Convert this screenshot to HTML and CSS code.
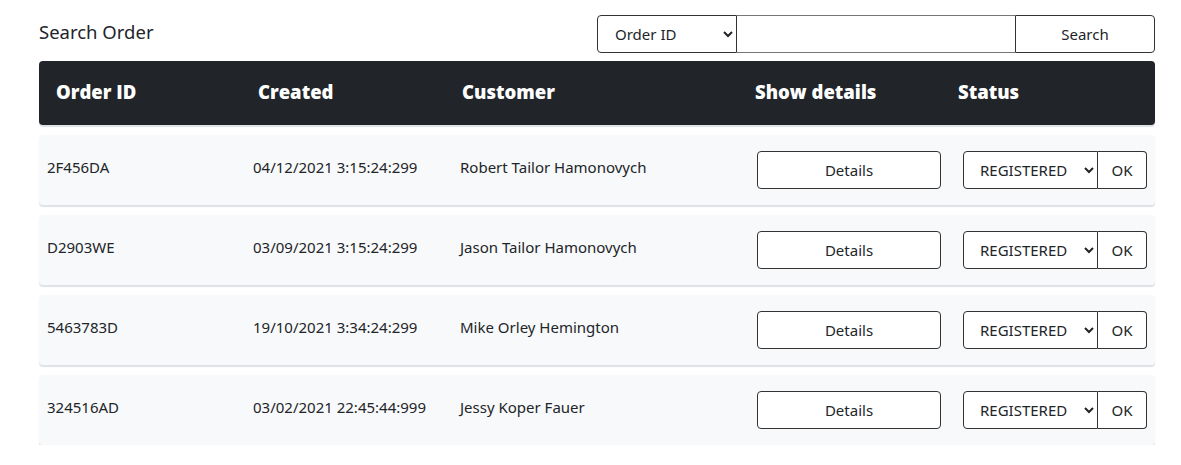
FILE: index.html
```html
<!DOCTYPE html>
<html>
<head>
<meta charset="utf-8">
<link rel="stylesheet" href="styles.css">
</head>
<body>
<div class="page">
  <div class="topbar">
    <h1 class="title">Search Order</h1>
    <div class="search">
      <select class="search-select"><option>Order ID</option></select>
      <input class="search-input" type="text">
      <button class="search-btn">Search</button>
    </div>
  </div>
  <div class="thead">
    <div>Order ID</div>
    <div>Created</div>
    <div>Customer</div>
    <div>Show details</div>
    <div>Status</div>
  </div>
  <div class="row">
    <div>2F456DA</div>
    <div>04/12/2021 3:15:24:299</div>
    <div>Robert Tailor Hamonovych</div>
    <div><button class="details">Details</button></div>
    <div class="status"><select class="status-select"><option>REGISTERED</option></select><button class="ok">OK</button></div>
  </div>
  <div class="row">
    <div>D2903WE</div>
    <div>03/09/2021 3:15:24:299</div>
    <div>Jason Tailor Hamonovych</div>
    <div><button class="details">Details</button></div>
    <div class="status"><select class="status-select"><option>REGISTERED</option></select><button class="ok">OK</button></div>
  </div>
  <div class="row">
    <div>5463783D</div>
    <div>19/10/2021 3:34:24:299</div>
    <div>Mike Orley Hemington</div>
    <div><button class="details">Details</button></div>
    <div class="status"><select class="status-select"><option>REGISTERED</option></select><button class="ok">OK</button></div>
  </div>
  <div class="row">
    <div>324516AD</div>
    <div>03/02/2021 22:45:44:999</div>
    <div>Jessy Koper Fauer</div>
    <div><button class="details">Details</button></div>
    <div class="status"><select class="status-select"><option>REGISTERED</option></select><button class="ok">OK</button></div>
  </div>
</div>
</body>
</html>
```
FILE: styles.css
```css
* { box-sizing: border-box; }
body {
  margin: 0;
  background: #fff;
  font-family: "Noto Sans", "Open Sans", sans-serif;
  color: #212529;
}
.page {
  width: 1116px;
  margin-left: 39px;
  padding-top: 15px;
}
.topbar {
  display: flex;
  justify-content: space-between;
  align-items: center;
  height: 38px;
}
.title {
  margin: 0;
  font-size: 18.5px;
  font-weight: 400;
  margin-top: -5px;
}
.search {
  display: flex;
  height: 38px;
}
.search-select {
  width: 140px;
  height: 38px;
  border: 1px solid #333;
  border-radius: 4px 0 0 4px;
  background: #fff;
  font-family: inherit;
  font-size: 15px;
  padding-left: 13px;
  color: #212529;
}
.search-input {
  width: 278px;
  height: 38px;
  border: 1px solid #777;
  border-left: none;
  border-right: none;
  outline: none;
}
.search-btn {
  width: 140px;
  height: 38px;
  border: 1px solid #333;
  border-radius: 0 4px 4px 0;
  background: #fff;
  font-family: inherit;
  font-size: 15px;
  color: #212529;
}
.thead {
  margin-top: 8px;
  height: 64px;
  background: #212529;
  border-radius: 4px;
  box-shadow: 0 2px 1px #dee2e6;
  display: grid;
  grid-template-columns: 202px 204px 293px 203px 1fr;
  align-items: center;
  padding-left: 17px;
  color: #fff;
  font-family: "Open Sans", sans-serif;
  font-weight: 800;
  font-size: 18.5px;
  padding-bottom: 4px;
}
.row {
  margin-top: 10px;
  height: 70px;
  background: #f8f9fa;
  border-radius: 4px;
  box-shadow: 0 2px 1px #dee2e6;
  display: grid;
  grid-template-columns: 206px 207px 297px 206px 1fr;
  align-items: center;
  padding: 0 8px;
  font-size: 15px;
}
.row > div:nth-child(-n+3) { margin-top: -6px; }
.details {
  width: 184px;
  height: 38px;
  border: 1px solid #333;
  border-radius: 4px;
  background: #fff;
  font-family: inherit;
  font-size: 15px;
  color: #212529;
}
.status { display: flex; }
.status-select {
  width: 135px;
  height: 38px;
  border: 1px solid #333;
  border-radius: 4px 0 0 4px;
  background: #fff;
  font-family: inherit;
  font-size: 15px;
  padding-left: 12px;
  color: #212529;
}
.ok {
  width: 49px;
  height: 38px;
  border: 1px solid #333;
  border-left: none;
  border-radius: 0 4px 4px 0;
  background: #fff;
  font-family: inherit;
  font-size: 15px;
  color: #212529;
}
```
